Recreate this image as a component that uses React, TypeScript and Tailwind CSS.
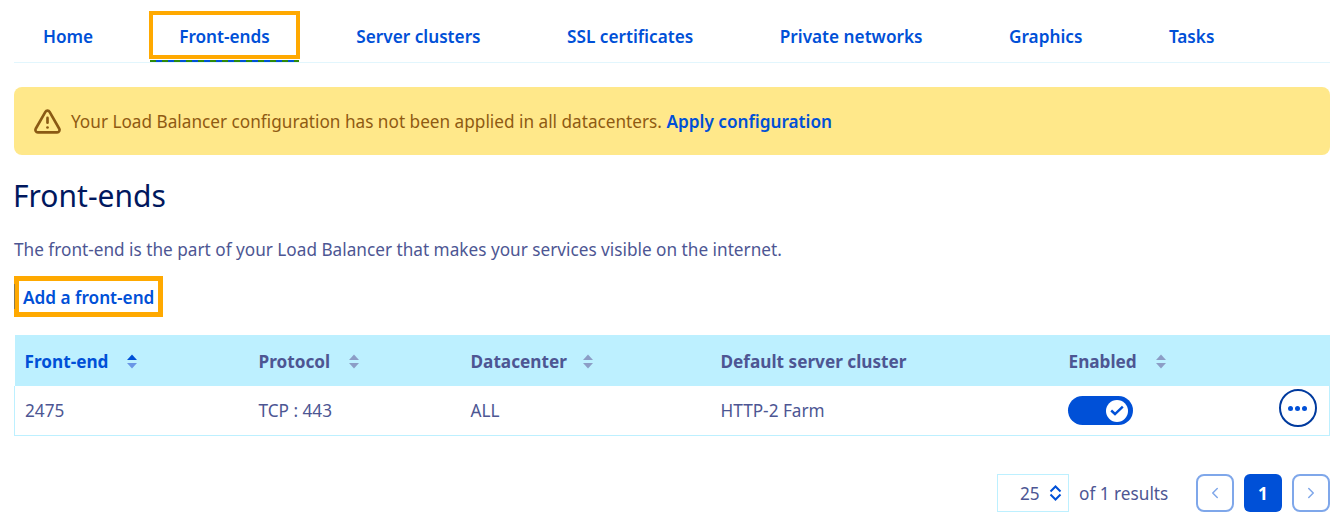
import { ChevronLeft, ChevronRight, TriangleAlert } from "lucide-react";

const font = "font-['Noto_Sans',sans-serif]";

const tabs = ["Home", "Front-ends", "Server clusters", "SSL certificates", "Private networks", "Graphics", "Tasks"];

function SortIcon({ active }: { active?: boolean }) {
  return (
    <svg width="10" height="15" viewBox="0 0 10 15" className="shrink-0">
      <path d="M5 0.5 L10 6 H0 Z" fill={active ? "#0050d7" : "#8c9dc6"} />
      <path d="M5 14.5 L10 9 H0 Z" fill={active ? "#6a96e6" : "#8c9dc6"} />
    </svg>
  );
}

export default function App() {
  return (
    <div className={`${font} h-[527px] w-[1344px] overflow-hidden bg-white px-[14px] text-[17.2px] text-[#4d5693]`}>
      <nav className="flex h-[63px] gap-[28.5px] border-b border-[#e2f6fd] pt-[12px]">
        {tabs.map((tab) => (
          <div key={tab} className={`relative h-[50px] ${tab === "Home" ? "-mr-[0.5px]" : ""}`}>
            <a
              className={`flex h-[46px] items-center px-[29px] pt-[4px] font-semibold text-[#0050d7] ${
                tab === "Front-ends" ? "outline-[4px] -outline-offset-[3px] outline-[#ffa900] [outline-style:solid]" : ""
              }`}
            >
              {tab}
            </a>
            {tab === "Front-ends" && (
              <div className="absolute bottom-0 left-0 right-0 h-[2px] bg-[repeating-linear-gradient(90deg,#2e8b0a_0,#2e8b0a_6px,#0050d7_6px,#0050d7_12px)]" />
            )}
          </div>
        ))}
      </nav>

      <div className="mt-[24px] flex h-[68px] items-center gap-[9px] rounded-[8px] bg-[#ffe88a] pl-[19px] text-[#8f5a12]">
        <TriangleAlert size={29} strokeWidth={2.2} className="text-[#8a5a14]" />
        <p className="pt-[1px]">
          Your Load Balancer configuration has not been applied in all datacenters.{" "}
          <a className="font-semibold text-[#0050d7]">Apply configuration</a>
        </p>
      </div>

      <h1 className="mt-[20px] -ml-px text-[30px] leading-[42px] text-[#00185e]">Front-ends</h1>

      <p className="mt-[22px] leading-[22px]">
        The front-end is the part of your Load Balancer that makes your services visible on the internet.
      </p>

      <a className="relative mt-[15px] flex h-[41px] w-[149px] items-center border-[5px] border-[#ffa900] pl-[4px] pt-[2px] font-semibold text-[#0050d7]">
        <span className="absolute -left-[5px] top-[3px] h-[25px] w-px bg-[#8a7a50]" />
        Add a front-end
      </a>

      <table className="mt-[18px] w-full table-fixed border-collapse">
        <thead>
          <tr className="h-[51px] bg-[#bdf0ff] text-left">
            <th className="w-[233px] pl-[10px] pt-[3px] font-bold text-[#0050d7]">
              <span className="flex items-center gap-[19px]">
                Front-end <SortIcon active />
              </span>
            </th>
            <th className="w-[212px] pl-[11px] pt-[3px] font-bold">
              <span className="flex items-center gap-[19px]">
                Protocol <SortIcon />
              </span>
            </th>
            <th className="w-[250px] pl-[11px] pt-[3px] font-bold">
              <span className="flex items-center gap-[16px]">
                Datacenter <SortIcon />
              </span>
            </th>
            <th className="w-[348px] pl-[11px] pt-[3px] font-bold">Default server cluster</th>
            <th className="pl-[11px] pt-[3px] font-bold">
              <span className="flex items-center gap-[19px]">
                Enabled <SortIcon />
              </span>
            </th>
            <th className="w-[61px]" />
          </tr>
        </thead>
        <tbody>
          <tr className="h-[49px] border border-t-0 border-[#bdf0ff]">
            <td className="pl-[10px] pt-[2px]">2475</td>
            <td className="pl-[11px] pt-[2px]">TCP : 443</td>
            <td className="pl-[11px] pt-[2px]">ALL</td>
            <td className="pl-[11px] pt-[2px]">HTTP-2 Farm</td>
            <td className="pl-[10px] pt-[1px]">
              <div className="flex h-[29px] w-[65px] items-center justify-end rounded-full bg-[#0050d7] pr-[5px]">
                <div className="flex h-[22px] w-[22px] items-center justify-center rounded-full bg-white">
                  <svg width="14" height="11" viewBox="0 0 14 11" fill="none" stroke="#0050d7" strokeWidth="2.4">
                    <path d="M1.2 5.5 L5 9 L12.8 1.6" />
                  </svg>
                </div>
              </div>
            </td>
            <td>
              <div className="mb-[4px] ml-[10px] flex h-[38px] w-[38px] items-center justify-center gap-[2px] rounded-full border-2 border-[#003a9e]">
                <span className="h-[5px] w-[5px] rounded-full bg-[#0050d7]" />
                <span className="h-[5px] w-[5px] rounded-full bg-[#0050d7]" />
                <span className="h-[5px] w-[5px] rounded-full bg-[#0050d7]" />
              </div>
            </td>
          </tr>
        </tbody>
      </table>

      <div className="mt-[38px] flex items-center justify-end">
        <div className="flex h-[38px] w-[72px] items-center gap-[9px] border border-[#bdf0ff] pl-[22px]">
          <span className="pt-[2px]">25</span>
          <svg width="13" height="16" viewBox="0 0 13 16" fill="none" stroke="#0050d7" strokeWidth="2">
            <path d="M1.5 6.5 L6.5 1.5 L11.5 6.5" />
            <path d="M1.5 9.5 L6.5 14.5 L11.5 9.5" />
          </svg>
        </div>
        <span className="ml-[10px] w-[88px] whitespace-nowrap pt-[2px]">of 1 results</span>
        <button className="ml-[29px] flex h-[38px] w-[38px] items-center justify-center rounded-[8px] border-2 border-[#7fa7ea] text-[#7fa7ea]">
          <ChevronLeft size={18} />
        </button>
        <button className="ml-[10px] flex h-[38px] w-[38px] items-center justify-center rounded-[6px] bg-[#0050d7] pt-[2px] font-bold text-white">
          1
        </button>
        <button className="ml-[10px] flex h-[38px] w-[38px] items-center justify-center rounded-[8px] border-2 border-[#7fa7ea] text-[#7fa7ea]">
          <ChevronRight size={18} />
        </button>
      </div>
    </div>
  );
}
